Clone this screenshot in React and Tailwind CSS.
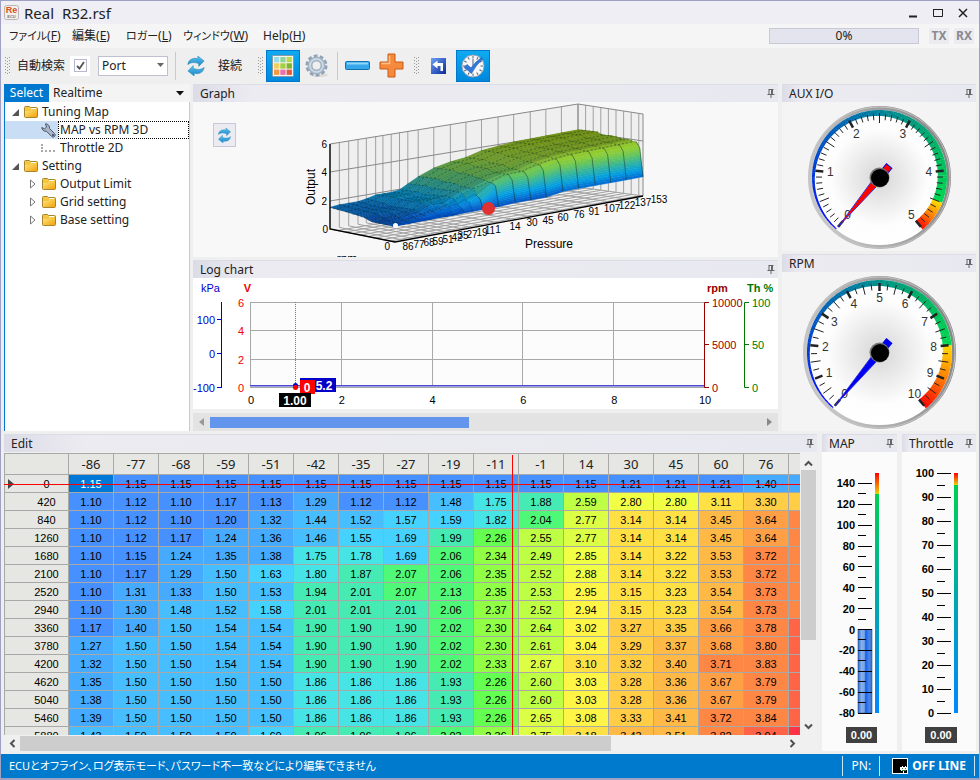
import { useState } from "react";

const columns = [-86, -77, -68, -59, -51, -42, -35, -27, -19, -11, -1, 14, 30, 45, 60, 76, 91];

const mapRows = [
  { rpm: 0, values: [1.15, 1.15, 1.15, 1.15, 1.15, 1.15, 1.15, 1.15, 1.15, 1.15, 1.15, 1.15, 1.21, 1.21, 1.21, 1.4, 1.4] },
  { rpm: 420, values: [1.1, 1.12, 1.1, 1.17, 1.13, 1.29, 1.12, 1.12, 1.48, 1.75, 1.88, 2.59, 2.8, 2.8, 3.11, 3.3, 3.35] },
  { rpm: 840, values: [1.1, 1.12, 1.1, 1.2, 1.32, 1.44, 1.52, 1.57, 1.59, 1.82, 2.04, 2.77, 3.14, 3.14, 3.45, 3.64, 3.75] },
  { rpm: 1260, values: [1.1, 1.12, 1.17, 1.24, 1.36, 1.46, 1.55, 1.69, 1.99, 2.26, 2.55, 2.77, 3.14, 3.14, 3.45, 3.64, 3.75] },
  { rpm: 1680, values: [1.1, 1.15, 1.24, 1.35, 1.38, 1.75, 1.78, 1.69, 2.06, 2.34, 2.49, 2.85, 3.14, 3.22, 3.53, 3.72, 3.83] },
  { rpm: 2100, values: [1.1, 1.17, 1.29, 1.5, 1.63, 1.8, 1.87, 2.07, 2.06, 2.35, 2.52, 2.88, 3.14, 3.22, 3.53, 3.72, 3.83] },
  { rpm: 2520, values: [1.1, 1.31, 1.33, 1.5, 1.53, 1.94, 2.01, 2.07, 2.13, 2.35, 2.53, 2.95, 3.15, 3.23, 3.54, 3.73, 3.84] },
  { rpm: 2940, values: [1.1, 1.3, 1.48, 1.52, 1.58, 2.01, 2.01, 2.01, 2.06, 2.37, 2.52, 2.94, 3.15, 3.23, 3.54, 3.73, 3.84] },
  { rpm: 3360, values: [1.17, 1.4, 1.5, 1.54, 1.54, 1.9, 1.9, 1.9, 2.02, 2.3, 2.64, 3.02, 3.27, 3.35, 3.66, 3.78, 3.89] },
  { rpm: 3780, values: [1.27, 1.5, 1.5, 1.54, 1.54, 1.9, 1.9, 1.9, 2.02, 2.3, 2.61, 3.04, 3.29, 3.37, 3.68, 3.8, 3.91] },
  { rpm: 4200, values: [1.32, 1.5, 1.5, 1.54, 1.54, 1.9, 1.9, 1.9, 2.02, 2.33, 2.67, 3.1, 3.32, 3.4, 3.71, 3.83, 3.94] },
  { rpm: 4620, values: [1.35, 1.5, 1.5, 1.5, 1.5, 1.86, 1.86, 1.86, 1.93, 2.26, 2.6, 3.03, 3.28, 3.36, 3.67, 3.79, 3.9] },
  { rpm: 5040, values: [1.38, 1.5, 1.5, 1.5, 1.5, 1.86, 1.86, 1.86, 1.93, 2.26, 2.6, 3.03, 3.28, 3.36, 3.67, 3.79, 3.9] },
  { rpm: 5460, values: [1.39, 1.5, 1.5, 1.5, 1.5, 1.86, 1.86, 1.86, 1.93, 2.26, 2.65, 3.08, 3.33, 3.41, 3.72, 3.84, 3.92] },
  { rpm: 5880, values: [1.43, 1.5, 1.5, 1.5, 1.6, 1.96, 1.96, 1.96, 2.03, 2.36, 2.75, 3.18, 3.43, 3.51, 3.82, 3.94, 4.05] },
];

// upper limit -> cell colour
const heatScale = [
  [1.22, "#4690ff"],
  [1.41, "#46aaff"],
  [1.55, "#46beff"],
  [1.7, "#46d2ff"],
  [1.865, "#46e4e4"],
  [2.015, "#46ebb4"],
  [2.2, "#50f878"],
  [2.29, "#64ff50"],
  [2.4, "#90ff46"],
  [2.645, "#beff46"],
  [2.785, "#dcff46"],
  [2.9, "#f0ff46"],
  [3.085, "#fff546"],
  [3.25, "#ffe146"],
  [3.355, "#ffcd46"],
  [3.56, "#ffb946"],
  [3.69, "#ffa046"],
  [3.88, "#ff8746"],
  [4, "#ff6446"],
];

const heatColor = (v) => {
  const hit = heatScale.find(([limit]) => v < limit);
  return hit ? hit[1] : "#ff3246";
};

// linear blend over [[position, [r, g, b]], ...]
const blend = (stops, t) => {
  if (t <= stops[0][0]) return stops[0][1];
  for (let i = 1; i < stops.length; i++) {
    const [p1, c1] = stops[i];
    if (t <= p1) {
      const [p0, c0] = stops[i - 1];
      const k = (t - p0) / (p1 - p0);
      return c0.map((c, n) => c + (c1[n] - c) * k);
    }
  }
  return stops[stops.length - 1][1];
};

const toRgb = (c, k = 1) => `rgb(${c.map((n) => Math.round(n * k)).join(",")})`;

/* ---------- icons ---------- */

const PinIcon = () => (
  <svg width="8" height="9" viewBox="0 0 8 9">
    <path d="M1.5 0.5h5M2 0.5v5M5.500 0.5v5M0.500 5.500h7M4 5.500v3.500" stroke="#666" fill="none" />
    <path d="M4 0.500h2v5h-2z" fill="#666" />
  </svg>
);

const SyncIcon = ({ size }) => (
  <svg width={size} height={size} viewBox="0 0 20 22">
    <defs>
      <linearGradient id="sync" x1="0" y1="0" x2="0" y2="1">
        <stop offset="0" stopColor="#5cc4f0" />
        <stop offset="1" stopColor="#1784c8" />
      </linearGradient>
    </defs>
    <path d="M1 9.500C1.500 4 6.500 1.500 12 3V0L19 5.500 13 11.500V8.500C8.500 6.500 4 7 1 9.500Z" fill="url(#sync)" stroke="#2b7cab" strokeWidth="0.5" />
    <path d="M19 12.500C18.500 18 13.500 20.500 8 19V22L1 16.500 7 10.500V13.500C11.500 15.500 16 15 19 12.500Z" fill="url(#sync)" stroke="#2b7cab" strokeWidth="0.5" />
  </svg>
);

const FolderIcon = () => (
  <svg width="14" height="12" viewBox="0 0 14 12">
    <defs>
      <linearGradient id="folder" x1="0" y1="0" x2="1" y2="1">
        <stop offset="0" stopColor="#ffe680" />
        <stop offset="1" stopColor="#f2a30a" />
      </linearGradient>
    </defs>
    <path d="M0.500 1.500q0-1 1-1h4l1 1h6q1 0 1 1v8q0 1-1 1h-11q-1 0-1-1z" fill="#f4c742" stroke="#a8842c" />
    <path d="M1 5h5l1-1.500h6v7.500H1z" fill="url(#folder)" />
    <path d="M7 2.500h5" stroke="#fff" />
  </svg>
);

const WrenchIcon = () => (
  <svg width="15" height="15" viewBox="0 0 15 15">
    <path
      d="M4.500 0.800A4 4 0 0 1 8.500 5.500L13.500 10.500A2 2 0 0 1 10.700 13.500L5.500 8.300A4 4 0 0 1 0.800 4.500L3.500 5.800 5.500 4.200Z"
      fill="#a9b6c6"
      stroke="#4a5668"
    />
    <circle cx="12" cy="12" r="1" fill="#39455a" />
  </svg>
);

const Collapsed = () => (
  <svg width="6" height="10" viewBox="0 0 6 10">
    <path d="M0.500 1L5 5 0.500 9Z" fill="#fff" stroke="#777" />
  </svg>
);

const Expanded = () => (
  <svg width="7" height="7" viewBox="0 0 7 7">
    <path d="M7 0V7H0Z" fill="#555" />
  </svg>
);

const GridIcon = () => (
  <svg width="22" height="22" viewBox="0 0 22 22">
    <rect x="0.500" y="0.500" width="21" height="21" rx="1" fill="#f6f4ee" stroke="#8a98a8" />
    {[
      ["#9adbe8", "#8fd4a0", "#b9d84a"],
      ["#f0d060", "#a5cf3c", "#7fb52e"],
      ["#f59a3c", "#ee6fb0", "#e8583c"],
    ].map((row, y) =>
      row.map((c, x) => <rect key={`${x}${y}`} x={2 + x * 6.3} y={2 + y * 6.3} width="5.300" height="5.300" fill={c} />)
    )}
  </svg>
);

const GearIcon = () => (
  <svg width="24" height="24" viewBox="0 0 24 24">
    <ellipse cx="14" cy="21" rx="9" ry="2" fill="#dcdcdc" />
    <circle cx="11.500" cy="11.500" r="9.500" fill="none" stroke="#8fa0b3" strokeWidth="3" strokeDasharray="3.700 2.270" />
    <circle cx="11.500" cy="11.500" r="6.500" fill="none" stroke="#a0b1c3" strokeWidth="5" />
    <circle cx="11.500" cy="11.500" r="6.500" fill="none" stroke="#cbd7e2" strokeWidth="2" />
  </svg>
);

const MinusIcon = () => (
  <svg width="25" height="9" viewBox="0 0 25 9">
    <rect x="0.500" y="0.500" width="24" height="8" rx="1" fill="#35a7ea" stroke="#1570b0" />
    <path d="M2 2.500h21" stroke="#8fd4fa" strokeWidth="2" />
  </svg>
);

const PlusIcon = () => (
  <svg width="25" height="25" viewBox="0 0 25 25">
    <path d="M9 1h7v8h8v7h-8v8H9v-8H1V9h8z" fill="#f58a3c" stroke="#c65a14" strokeLinejoin="round" />
    <path d="M10.500 2.500v8H2.500" stroke="#ffc08a" strokeWidth="1.500" fill="none" />
  </svg>
);

const UndoIcon = () => (
  <svg width="15" height="16" viewBox="0 0 15 16">
    <defs>
      <linearGradient id="undo" x1="0" y1="0" x2="1" y2="1">
        <stop offset="0" stopColor="#6fa0f4" />
        <stop offset="1" stopColor="#0a2a9c" />
      </linearGradient>
    </defs>
    <rect width="15" height="16" fill="url(#undo)" />
    <path d="M1.500 6.500L6.500 2.500V5H12V13H9.500V8H6.500V10.500Z" fill="#fff" />
  </svg>
);

const ClockIcon = () => (
  <svg width="24" height="24" viewBox="0 0 24 24">
    <circle cx="12" cy="12" r="11" fill="#f4f6fa" stroke="#9aa6b8" />
    {[0, 30, 60, 90, 120, 150, 180, 210, 240, 270, 300, 330].map((a) => (
      <path key={a} d="M12 2v2.500" stroke="#5a6474" transform={`rotate(${a} 12 12)`} />
    ))}
    <path d="M12 12V5" stroke="#8a94a4" strokeWidth="1.500" />
    <path d="M3 13.500L6 10.500 10 14Q14 8 20.500 3.500L21.500 5Q14.500 11.500 10.500 19.500Q7 16 3 13.500Z" fill="#2f78dc" stroke="#1a4ca8" strokeWidth="0.600" />
  </svg>
);

const LogoIcon = () => (
  <svg width="15" height="15" viewBox="0 0 15 15">
    <rect x="0.500" y="0.500" width="14" height="14" rx="2" fill="#f2efec" stroke="#b8b4b0" />
    <text x="7.500" y="8" textAnchor="middle" fontSize="9" fontWeight="bold" fontFamily="Liberation Sans" fill="#d8501e">Re</text>
    <text x="7.500" y="13" textAnchor="middle" fontSize="4" fontWeight="bold" fontFamily="Liberation Sans" fill="#777">ECU</text>
  </svg>
);

const Chevron = ({ d }) => (
  <svg width="9" height="9" viewBox="0 0 9 9">
    <path d={d} fill="none" stroke="#505050" strokeWidth="2" />
  </svg>
);

const Grip = () => (
  <svg className="shrink-0" width="5" height="18" viewBox="0 0 5 18">
    {[0, 1, 2, 3, 4, 5].map((i) => (
      <g key={i} fill="#999">
        <rect x="0" y={i * 3} width="1" height="1" />
        <rect x="4" y={i * 3} width="1" height="1" />
        <rect x="2" y={i * 3 + 1} width="1" height="1" />
      </g>
    ))}
  </svg>
);

/* ---------- panel frame ---------- */

const Panel = ({ title, className = "", children }) => (
  <section className={`flex flex-col min-w-0 ${className}`}>
    <header className="flex items-center justify-between h-[18px] shrink-0 pl-[7px] pr-[3px] border-t border-[#dcdce6] bg-gradient-to-r from-[#dcdce8] via-[#ecebf1] via-10% to-[#e8e8f0]">
      <h2 className="text-[12px] leading-4">{title}</h2>
      <button type="button" aria-label={`Pin ${title}`}>
        <PinIcon />
      </button>
    </header>
    {children}
  </section>
);

/* ---------- 3D surface ---------- */

const extraCols = [107, 122, 137, 153];
const pressures = [...columns, ...extraCols];
const TOTAL_ROWS = 20;

const surface = Array.from({ length: TOTAL_ROWS + 1 }, (_, r) => {
  const src = mapRows[Math.min(r, mapRows.length - 1)].values;
  const fade = Math.max(0, r - 14) / 6;
  const base = src.map((v, c) => v + (c < 5 ? 0.1 * fade : c > 12 ? -0.05 * fade : -0.1 * fade));
  const last = base[base.length - 1];
  return [...base, ...extraCols.map((_, i) => (r === 0 ? 1.4 : last + 0.03 * (i + 1)))];
});

const project = (c, r, v) => {
  const u = (pressures[c] + 86) / 239;
  const w = r / TOTAL_ROWS;
  const x = 395 + 248 * u - 65 * w;
  const y = 242 - 46 * u - 13 * w + 3 * u * w;
  return [x, y - (v * (85 - 3 * u)) / 6];
};

const surfaceStops = [
  [1, [0, 66, 168]],
  [1.3, [0, 92, 204]],
  [1.9, [0, 158, 228]],
  [2.5, [48, 180, 160]],
  [3, [96, 196, 96]],
  [3.5, [142, 206, 56]],
  [4.2, [150, 190, 20]],
];

const surfaceFaces = () => {
  const faces = [];
  for (let r = TOTAL_ROWS - 1; r >= 0; r--) {
    for (let c = pressures.length - 2; c >= 0; c--) {
      const steps = r === 0 ? 12 : 2;
      for (let s = steps - 1; s >= 0; s--) {
        const a = s / steps;
        const b = (s + 1) / steps;
        const at = (col, t) => {
          const v = surface[r][col] + (surface[r + 1][col] - surface[r][col]) * t;
          return { v, p: project(col, r + t, v) };
        };
        const q = [at(c, a), at(c + 1, a), at(c + 1, b), at(c, b)];
        const mean = q.reduce((sum, n) => sum + n.v, 0) / 4;
        const shade = r < 2 ? 1 : r < 4 ? 0.88 : 0.74;
        faces.push({ key: `${r}-${c}-${s}`, points: q.map((n) => n.p.join(",")).join(" "), fill: toRgb(blend(surfaceStops, mean), shade) });
      }
    }
  }
  return faces;
};

const line = (pts) => pts.map((p) => p.join(",")).join(" ");

const SurfaceChart = () => {
  const wallX = pressures.map((p) => (p + 86) / 239);
  const faces = surfaceFaces();
  const labels = [
    ["86", 408, 250], ["77", 419, 248], ["68", 429, 246], ["59", 438, 245], ["51", 448, 243], ["42", 457, 241],
    ["35", 463, 239], ["27", 472, 238], ["19", 482, 236], ["11", 490, 234], ["1", 498, 233], ["14", 515, 230],
    ["30", 532, 226], ["45", 548, 224], ["60", 563, 221], ["76", 579, 218], ["91", 594, 215], ["107", 612, 212],
    ["122", 627, 209], ["137", 643, 206], ["153", 659, 203],
  ];
  return (
    <svg viewBox="193 102 585 155" className="w-full h-full" fontFamily="Liberation Sans" fontSize="10">
      <polygon points="330,144 578,104 578,187 330,229" fill="#efefef" />
      <polygon points="578,104 643,114 643,196 578,187" fill="#efefef" />
      <polygon points="330,229 395,242 643,196 578,187" fill="#f2f2f2" />
      <g stroke="#a0a0a0" fill="none">
        {wallX.map((u, i) => (
          <path key={i} d={`M${330 + 248 * u} ${144 - 40 * u}V${229 - 42 * u}L${395 + 248 * u} ${242 - 46 * u}`} />
        ))}
        {[1, 2, 3, 4, 5, 6, 7, 8].map((i) => (
          <path key={i} d={`M${578 + i * 7.6} ${104 + i * 1.2}V${187 + i * 1.1}L${330 + i * 7.6} ${229 + i * 1.5}`} />
        ))}
        <path d="M330 144L578 104 643 114V196M330 172L578 131.500 643 141M330 201L578 159 643 168M578 104V187" stroke="#888" />
      </g>
      {faces.map((f) => (
        <polygon key={f.key} points={f.points} fill={f.fill} stroke={f.fill} strokeWidth="0.400" />
      ))}
      <g fill="none" stroke="#0a2a20">
        {pressures.map((_, c) => (
          <g key={c}>
            <polyline points={line(surface.slice(0, 3).map((row, r) => project(c, r, row[c])))} opacity={c > 9 ? 0.6 : 0.2} strokeWidth="0.800" />
            <polyline points={line(surface.slice(2).map((row, r) => project(c, r + 2, row[c])))} opacity="0.500" strokeDasharray="2 2" strokeWidth="0.800" />
          </g>
        ))}
        {surface.map((row, r) =>
          r > 2 && r % 3 === 0 ? (
            <polyline key={r} points={line(row.map((v, c) => project(c, r, v)))} opacity="0.500" strokeDasharray="2 2" strokeWidth="0.800" />
          ) : null
        )}
      </g>
      <path d="M330 144V229L395 242 643 196" fill="none" stroke="#000" strokeWidth="1.300" />
      <circle cx="488.500" cy="208.500" r="6.500" fill="#e03030" />
      <circle cx="395.500" cy="225.500" r="2.500" fill="#fff" />
      <g textAnchor="end">
        <text x="327" y="148">6</text>
        <text x="327" y="176">4</text>
        <text x="327" y="205">2</text>
        <text x="328" y="233">0</text>
        <text x="390" y="250">0</text>
      </g>
      <g textAnchor="middle">
        {labels.map(([t, x, y]) => (
          <text key={t} x={x} y={y}>{t}</text>
        ))}
        <text x="549" y="248" fontSize="12">Pressure</text>
        <text fontSize="12" transform="translate(315 187) rotate(-90)">Output</text>
        <text x="347" y="263" fontSize="12">rpm</text>
      </g>
    </svg>
  );
};

/* ---------- log chart ---------- */

const LogChart = () => (
  <svg viewBox="193 278 585 131" className="w-full h-full" fontFamily="Liberation Sans" fontSize="11">
    <rect x="250" y="302" width="455" height="85" fill="#fcfcfc" />
    <path
      d="M250.500 302V388M341.500 302V388M432.500 302V388M522.500 302V388M613.500 302V388M250 302.500H705M250 330.500H705M250 359.500H705M250 387.500H705"
      stroke="#a8a8a8"
      fill="none"
    />
    <path d="M250 386.500H705" stroke="#a0a0e0" />
    <path d="M250 385.500H705" stroke="#4a4ad0" />
    <path d="M295.500 302V386" stroke="#777" strokeDasharray="1 1" />
    <path d="M221.500 302V388M217 319.500H221M217 353.500H221M217 387.500H221" stroke="#0000c8" />
    <path d="M709 302.500H704.500V387.500H709M705 344.500H709" stroke="#960000" fill="none" />
    <path d="M749 302.500H744.500V387.500H749M745 344.500H749" stroke="#007800" fill="none" />
    <g fill="#0000c8">
      <text x="201" y="292">kPa</text>
      <g textAnchor="end">
        <text x="215" y="324">100</text>
        <text x="215" y="358">0</text>
        <text x="215" y="392">-100</text>
      </g>
    </g>
    <g fill="#f00000" textAnchor="end">
      <text x="251" y="292" fontWeight="bold">V</text>
      <text x="244" y="307">6</text>
      <text x="244" y="335">4</text>
      <text x="244" y="364">2</text>
      <text x="244" y="392">0</text>
    </g>
    <g fill="#960000">
      <text x="707" y="292" fontWeight="bold">rpm</text>
      <text x="712" y="307">10000</text>
      <text x="712" y="349">5000</text>
      <text x="712" y="392">0</text>
    </g>
    <g fill="#007800">
      <text x="747" y="292" fontWeight="bold">Th %</text>
      <text x="752" y="307">100</text>
      <text x="752" y="349">50</text>
      <text x="752" y="392">0</text>
    </g>
    <g textAnchor="middle">
      {[0, 2, 4, 6, 8, 10].map((n) => (
        <text key={n} x={251 + n * 45.4} y="404">{n}</text>
      ))}
    </g>
    <circle cx="295.500" cy="385.500" r="2.500" fill="#0000c8" />
    <circle cx="295.500" cy="387.500" r="2.500" fill="#f00" />
    <g fill="#fff" fontWeight="bold" fontSize="12" textAnchor="middle">
      <rect x="300" y="378" width="36" height="14" fill="#0000c8" />
      <text x="324" y="390">5.2</text>
      <rect x="300" y="380" width="15" height="14" fill="#f00" />
      <text x="307" y="392">0</text>
      <rect x="279" y="393" width="32" height="14" fill="#000" />
      <text x="295" y="405">1.00</text>
    </g>
  </svg>
);

/* ---------- round gauge ---------- */

const arcStops = [
  [0, [0, 0, 255]],
  [0.3, [0, 80, 200]],
  [0.5, [0, 120, 165]],
  [0.65, [0, 150, 130]],
  [0.8, [0, 180, 100]],
  [1, [0, 215, 80]],
];
const warnStops = [
  [0, [255, 215, 0]],
  [0.5, [255, 120, 0]],
  [1, [255, 0, 0]],
];

const polar = (deg, r) => [Math.cos((deg * Math.PI) / 180) * r, Math.sin((deg * Math.PI) / 180) * r];

const Gauge = ({ id, size, max, minor, mid, warn, needle }) => {
  const R = size / 2;
  const outer = R - 4;
  const angle = (v) => 130 + (280 * v) / max;
  const segments = Array.from({ length: 140 }, (_, i) => {
    const t0 = i / 140;
    const t1 = (i + 1) / 140;
    const limit = warn / max;
    const color = t0 < limit - 0.001 ? blend(arcStops, t0 / limit) : blend(warnStops, (t0 - limit) / (1 - limit));
    const a0 = 130 + 280 * t0;
    const a1 = 130 + 280 * t1 + 0.3;
    const w0 = 1 + 10 * t0;
    const w1 = 1 + 10 * t1;
    return { points: line([polar(a0, outer), polar(a1, outer), polar(a1, outer - w1), polar(a0, outer - w0)]), fill: toRgb(color) };
  });
  const count = Math.round(max / minor);
  const midEvery = Math.round(mid / minor);
  const majorEvery = Math.round(1 / minor);
  return (
    <svg width={size} height={size} viewBox={`${-R} ${-R} ${size} ${size}`} role="img" aria-label={`${id} gauge`}>
      <defs>
        <radialGradient id={`${id}-face`}>
          <stop offset="0" stopColor="#d6d6d6" />
          <stop offset="0.700" stopColor="#fdfdfd" />
          <stop offset="1" stopColor="#fff" />
        </radialGradient>
        <linearGradient id={`${id}-rim`} x1="0" y1="0.400" x2="1" y2="0.100">
          <stop offset="0" stopColor="#c8c8c8" />
          <stop offset="1" stopColor="#808080" />
        </linearGradient>
      </defs>
      <circle r={R - 2} fill={`url(#${id}-face)`} stroke={`url(#${id}-rim)`} strokeWidth="4" />
      <circle r={R - 1} fill="none" stroke="#c4c4c4" strokeWidth="1" />
      {segments.map((s, i) => (
        <polygon key={i} points={s.points} fill={s.fill} />
      ))}
      {Array.from({ length: count + 1 }, (_, i) => {
        const major = i % majorEvery === 0;
        const half = i % midEvery === 0;
        const a = angle(i * minor);
        const from = polar(a, outer - (major || half ? 3 : 4));
        const to = polar(a, outer - (major ? 11 : half ? 13 : 10));
        return <path key={i} d={`M${from.join(" ")}L${to.join(" ")}`} stroke="#222" strokeWidth={major ? 2.5 : 1} />;
      })}
      <g fontFamily="Liberation Sans" fontSize="12" fill="#333" textAnchor="middle">
        {Array.from({ length: max + 1 }, (_, i) => {
          const [x, y] = polar(angle(i), outer - 18);
          return <text key={i} x={x} y={y + 4}>{i}</text>;
        })}
      </g>
      <g transform="rotate(130)">
        <path d={`M0 -4V4L${outer - 3} 0Z`} fill={needle} stroke="#2a2ae0" strokeWidth="0.800" />
        <path d="M-15 -3.500h6v7h-6z" fill={needle} stroke="#0000e0" strokeWidth="1" />
      </g>
      <circle r="10" fill="#777" />
      <circle cx="0.500" cy="0.500" r="9" fill="#000" />
    </svg>
  );
};

/* ---------- bar gauge ---------- */

const BarGauge = ({ id, min, max, step, top, fillTo, warn, value }) => {
  const y = (v) => 473 + ((top - v) * 240) / (top - min);
  const majors = [];
  for (let v = min; v <= max; v += step) majors.push(v);
  const minors = majors.map((v) => v + step / 2).filter((v) => v < top);
  return (
    <div className="flex-1 min-h-0 flex flex-col items-center bg-[#fbfbfb] pb-2">
      <svg className="shrink-0" width="74" height="275" viewBox="822 452 74 275" fontFamily="Liberation Sans" fontSize="11" fontWeight="bold">
        <defs>
          <linearGradient id={`${id}-range`} x1="0" y1="0" x2="0" y2="1">
            <stop offset="0" stopColor="#00d050" />
            <stop offset="0.600" stopColor="#00a0c0" />
            <stop offset="1" stopColor="#0088ff" />
          </linearGradient>
          <linearGradient id={`${id}-warn`} x1="0" y1="0" x2="0" y2="1">
            <stop offset="0" stopColor="#ff0000" />
            <stop offset="1" stopColor="#f0d000" />
          </linearGradient>
          <linearGradient id={`${id}-tube`} x1="0" y1="0" x2="1" y2="0">
            <stop offset="0" stopColor="#2f66c0" />
            <stop offset="0.250" stopColor="#86b0ea" />
            <stop offset="0.450" stopColor="#7aa4e4" />
            <stop offset="0.550" stopColor="#1460f0" />
            <stop offset="0.800" stopColor="#4a88e4" />
            <stop offset="1" stopColor="#3a6cb8" />
          </linearGradient>
        </defs>
        {fillTo !== undefined && (
          <rect x="857" y={y(fillTo)} width="14" height={y(min) - y(fillTo)} fill={`url(#${id}-tube)`} stroke="#2a58a8" strokeWidth="0.600" />
        )}
        <rect x="874" y="473" width="4" height={y(warn) - 473} fill={`url(#${id}-warn)`} />
        <rect x="874" y={y(warn)} width="4" height={y(min) - y(warn)} fill={`url(#${id}-range)`} />
        {majors.map((v) => (
          <g key={v}>
            <path d={`M857 ${Math.floor(y(v)) + 0.5}h14`} stroke="#000" />
            <text x="854" y={y(v) + 4} textAnchor="end">{v}</text>
          </g>
        ))}
        {minors.map((v) => (
          <path key={v} d={`M857 ${Math.floor(y(v)) + 0.5}h8`} stroke="#000" />
        ))}
      </svg>
      <output className="ml-1 bg-[#404040] text-white font-bold text-[11px] leading-4 px-[5px] font-['Liberation_Sans',sans-serif]">
        {value}
      </output>
    </div>
  );
};

/* ---------- tree ---------- */

const treeItems = [
  { label: "Tuning Map", level: 0, icon: "folder", open: true },
  { label: "MAP vs RPM 3D", level: 1, icon: "wrench" },
  { label: "Throttle 2D", level: 1, icon: "dots" },
  { label: "Setting", level: 0, icon: "folder", open: true },
  { label: "Output Limit", level: 1, icon: "folder" },
  { label: "Grid setting", level: 1, icon: "folder" },
  { label: "Base setting", level: 1, icon: "folder" },
];

const SidePanel = () => {
  const [selected, setSelected] = useState("MAP vs RPM 3D");
  return (
    <aside className="w-[186px] shrink-0 flex flex-col">
      <div className="flex h-[18px] items-center bg-[#f4f4f4]">
        <button type="button" className="h-full w-[45px] bg-[#0078d0] text-white">Select</button>
        <button type="button" className="px-1">Realtime</button>
        <button type="button" aria-label="More tabs" className="ml-auto pr-[6px]">
          <svg width="8" height="5" viewBox="0 0 8 5">
            <path d="M0 0H8L4 4.500Z" fill="#111" />
          </svg>
        </button>
      </div>
      <ul className="flex-1 bg-white border-l border-l-[#0078d0] border-r border-r-[#c8c8d8] pt-px">
        {treeItems.map((item) => {
          const active = selected === item.label;
          return (
            <li
              key={item.label}
              className={`flex items-center h-[18px] cursor-default ${item.level ? "pl-5" : "pl-[2px]"} ${active ? "bg-[#c9ddf5]" : ""}`}
              onClick={() => setSelected(item.label)}
            >
              <span className="w-4 shrink-0 flex justify-center">
                {item.icon === "folder" && (item.open ? <Expanded /> : <Collapsed />)}
              </span>
              <span className="w-[17px] shrink-0 flex">
                {item.icon === "folder" && <span className="pl-px"><FolderIcon /></span>}
                {item.icon === "wrench" && <WrenchIcon />}
                {item.icon === "dots" && <span className="w-[14px] h-2 border-l-2 border-b-2 border-dotted border-[#aaa]" />}
              </span>
              <span className={`flex-1 leading-4 pl-px border border-dotted ${active ? "bg-white border-black" : "border-transparent"}`}>
                {item.label}
              </span>
            </li>
          );
        })}
      </ul>
    </aside>
  );
};

/* ---------- edit table ---------- */

const EditTable = () => (
  <div className="flex-1 min-h-0 flex flex-col pt-px">
    <div className="flex-1 min-h-0 flex">
      <div className="relative flex-1 min-w-0 overflow-hidden bg-white">
        <table className="table-fixed border-collapse w-[829px] text-center">
          <thead>
            <tr className="h-[21px] bg-[#e6e6e2] text-[13px] leading-4">
              <th className="w-16 border border-[#a8a8a8]" aria-label="rpm" />
              {columns.map((c) => (
                <th key={c} className="w-[45px] border border-[#a8a8a8] font-normal">{c}</th>
              ))}
            </tr>
          </thead>
          <tbody>
            {mapRows.map((row, r) => (
              <tr key={row.rpm} className="h-[18px]">
                <th className="border border-[#a8a8a8] bg-[#e6e6e2] font-normal p-0 text-[11px] leading-4 text-black font-['Liberation_Sans',sans-serif]">
                  <div className="flex items-center">
                    <span className="w-5 flex justify-center pr-2">
                      {r === 0 && (
                        <svg width="6" height="10" viewBox="0 0 6 10">
                          <path d="M0 0L6 5 0 10Z" fill="#444" />
                        </svg>
                      )}
                    </span>
                    <span className="flex-1">{row.rpm}</span>
                  </div>
                </th>
                {row.values.map((v, c) => (
                  <td
                    key={c}
                    className={`border border-[#a8a8a8] p-0 text-[11px] leading-4 font-['Liberation_Sans',sans-serif] ${r === 0 && c === 0 ? "text-white" : "text-black"}`}
                    style={{ backgroundColor: r === 0 && c === 0 ? "#0078d7" : heatColor(v) }}
                  >
                    {v.toFixed(2)}
                  </td>
                ))}
              </tr>
            ))}
          </tbody>
        </table>
        {/* cursor cross hair */}
        <div className="absolute left-0 right-0 top-[31px] h-px bg-[#ff0000]" />
        <div className="absolute top-[2px] bottom-0 left-[508px] w-px bg-[#ff0000]" />
      </div>
      <div className="w-[17px] shrink-0 flex flex-col items-center bg-[#f0f0f0] py-1">
        <button type="button" aria-label="Scroll up" className="h-[13px]"><Chevron d="M1 6.500L4.500 3 8 6.500" /></button>
        <div className="w-[15px] h-[170px] bg-[#cdcdcd]" />
        <button type="button" aria-label="Scroll down" className="mt-auto"><Chevron d="M1 2.500L4.500 6 8 2.500" /></button>
      </div>
    </div>
    <div className="h-4 shrink-0 flex items-center bg-[#f0f0f0] pr-5">
      <button type="button" aria-label="Scroll left" className="w-4 flex justify-center"><Chevron d="M6.500 1L3 4.500 6.500 8" /></button>
      <div className="flex-1 h-[15px]">
        <div className="h-full w-[77%] bg-[#cdcdcd]" />
      </div>
      <button type="button" aria-label="Scroll right"><Chevron d="M2.500 1L6 4.500 2.500 8" /></button>
    </div>
  </div>
);

/* ---------- top bars ---------- */

const menus = [
  { label: "ファイル", key: "F", width: "w-[63px]" },
  { label: "編集", key: "E", width: "w-[54px]" },
  { label: "ロガー", key: "L", width: "w-[57px]" },
  { label: "ウィンドウ", key: "W", width: "w-[80px]" },
  { label: "Help", key: "H", width: "w-[60px]" },
];

const TopBars = () => {
  const [auto, setAuto] = useState(true);
  return (
    <>
      <div className="flex items-center h-[23px] bg-[#eeeef4] pl-[3px] pr-1">
        <LogoIcon />
        <h1 className="ml-[5px] text-[15px] leading-5 whitespace-pre">Real  R32.rsf</h1>
        <div className="ml-auto flex">
          <button type="button" aria-label="Minimize" className="w-[25px] flex justify-center">
            <svg width="10" height="10" viewBox="0 0 10 10"><path d="M1 8.500h8" stroke="#222" strokeWidth="2" /></svg>
          </button>
          <button type="button" aria-label="Maximize" className="w-[25px] flex justify-center">
            <svg width="10" height="10" viewBox="0 0 10 10"><path d="M0.500 1.500h9v7h-9zM0 1.500h10" stroke="#222" fill="none" /></svg>
          </button>
          <button type="button" aria-label="Close" className="w-[25px] flex justify-center">
            <svg width="10" height="10" viewBox="0 0 10 10"><path d="M1 1L9 9M9 1L1 9" stroke="#222" strokeWidth="1.500" /></svg>
          </button>
        </div>
      </div>

      <nav className="flex items-center h-6 bg-[#f5f5f5] pl-2 pr-[5px]">
        {menus.map((m) => (
          <button key={m.key} type="button" className={`${m.width} text-left whitespace-nowrap`}>
            <span className={m.key === "H" || m.key === "E" ? "" : "text-[11px]"}>{m.label}</span>(<u>{m.key}</u>)
          </button>
        ))}
        <div role="progressbar" aria-label="Progress" aria-valuenow={0} className="ml-auto w-[150px] h-4 leading-[14px] border border-[#c8c8d8] bg-[#e4e4ee] text-center">0%</div>
        <span className="ml-[10px] w-5 text-center text-[#8a8a90] font-bold bg-[#ececf0] leading-4">TX</span>
        <span className="ml-[5px] w-5 text-center text-[#8a8a90] font-bold bg-[#ececf0] leading-4">RX</span>
      </nav>

      <div className="flex items-center h-[35px] bg-[#efefef] pl-1">
        <Grip />
        <label htmlFor="auto" className="ml-[7px] w-[53px]">自動検索</label>
        <span className="relative flex w-5 h-5 items-center justify-center bg-white">
          <input
            id="auto"
            type="checkbox"
            checked={auto}
            onChange={(e) => setAuto(e.target.checked)}
            className="appearance-none w-[13px] h-[13px] border border-[#b8b8cc] bg-white"
          />
          {auto && (
            <svg className="absolute pointer-events-none" width="9" height="9" viewBox="0 0 9 9">
              <path d="M1 5L3.500 7.500 8 1" stroke="#555" strokeWidth="1.800" fill="none" />
            </svg>
          )}
        </span>
        <span className="relative ml-2 flex items-center">
          <select aria-label="Port" className="appearance-none w-[70px] h-5 pl-[3px] border border-[#c0c0d0] bg-white leading-4">
            <option>Port</option>
          </select>
          <svg className="absolute right-1 pointer-events-none" width="7" height="5" viewBox="0 0 7 5">
            <path d="M0 0H7L3.500 4Z" fill="#666" />
          </svg>
        </span>
        <span className="ml-[7px] mr-[10px] w-px h-7 bg-[#c8c8d4]" />
        <button type="button" className="flex items-center gap-3">
          <SyncIcon size={20} />
          接続
        </button>
        <span className="ml-4 flex"><Grip /></span>
        <button type="button" aria-label="Grid" className="ml-[3px] w-[34px] h-8 flex items-center justify-center border border-[#0078d0] bg-gradient-to-b from-[#10aaf0] to-[#0088dc]">
          <GridIcon />
        </button>
        <button type="button" aria-label="Options" className="ml-[5px]"><GearIcon /></button>
        <span className="ml-2 mr-[7px] w-px h-7 bg-[#c8c8d4]" />
        <button type="button" aria-label="Decrease"><MinusIcon /></button>
        <button type="button" aria-label="Increase" className="ml-[9px]"><PlusIcon /></button>
        <span className="ml-[10px] flex"><Grip /></span>
        <button type="button" aria-label="Undo" className="ml-3"><UndoIcon /></button>
        <button type="button" aria-label="Clock" className="ml-[10px] w-[34px] h-8 flex items-center justify-center border border-[#0078d0] bg-gradient-to-b from-[#10aaf0] to-[#0088dc]">
          <ClockIcon />
        </button>
      </div>
    </>
  );
};

const App = () => (
  <div className="h-screen flex flex-col bg-[#efefef] border border-b-2 border-[#a0a0c4] text-[12px] leading-4 text-[#222] font-['Noto_Sans','Noto_Sans_CJK_JP',sans-serif] [font-feature-settings:'palt']">
    <TopBars />

    <main className="flex-1 min-h-0 flex flex-col px-[3px] pt-px">
      <div className="flex shrink-0">
        <SidePanel />

        <div className="flex-1 min-w-0 ml-[3px] flex flex-col">
          <Panel title="Graph">
            <div className="relative h-[155px] bg-[#f8f8f8]">
              <SurfaceChart />
              <button type="button" aria-label="Refresh graph" className="absolute left-5 top-[21px] w-[23px] h-6 flex items-center justify-center border border-[#c8c8d8] bg-[#ecebf1]">
                <SyncIcon size={15} />
              </button>
            </div>
          </Panel>
          <Panel title="Log chart" className="mt-[3px]">
            <div className="h-[131px] bg-white">
              <LogChart />
            </div>
            <div className="mt-1 h-[18px] flex items-center bg-[#e3e3e3] px-[6px]">
              <button type="button" aria-label="Scroll log left">
                <svg width="5" height="8" viewBox="0 0 5 8"><path d="M5 0V8L0 4Z" fill="#999" /></svg>
              </button>
              <div className="flex-1 mx-[6px]">
                <div className="h-[11px] w-[47%] bg-[#6495ed]" />
              </div>
              <button type="button" aria-label="Scroll log right">
                <svg width="5" height="8" viewBox="0 0 5 8"><path d="M0 0V8L5 4Z" fill="#888" /></svg>
              </button>
            </div>
          </Panel>
        </div>

        <div className="w-[194px] ml-1 shrink-0 flex flex-col">
          <Panel title="AUX I/O">
            <div className="h-[149px] flex justify-center pt-1 bg-[#f4f4f4]">
              <Gauge id="aux" size={143} max={5} minor={0.1} mid={0.5} warn={4.5} needle="#ff0000" />
            </div>
          </Panel>
          <Panel title="RPM" className="mt-[3px] flex-1">
            <div className="flex-1 flex justify-center pt-1 bg-[#f4f4f4]">
              <Gauge id="rpm" size={153} max={10} minor={0.25} mid={0.5} warn={8} needle="#0000f0" />
            </div>
          </Panel>
        </div>
      </div>

      <div className="flex-1 min-h-0 flex gap-[5px] mt-[3px] mb-[3px]">
        <Panel title="Edit" className="flex-1">
          <EditTable />
        </Panel>
        <Panel title="MAP" className="w-[75px] shrink-0">
          <BarGauge id="map" min={-80} max={140} step={20} top={150} fillTo={0} warn={130} value="0.00" />
        </Panel>
        <Panel title="Throttle" className="w-[74px] shrink-0">
          <BarGauge id="throttle" min={0} max={100} step={10} top={100} warn={95} value="0.00" />
        </Panel>
      </div>
    </main>

    <footer className="flex items-center h-6 shrink-0 bg-[#007acc] text-white pl-2 pr-1">
      <p className="flex-1 truncate text-[11px]">ECUとオフライン、ログ表示モード、パスワード不一致などにより編集できません</p>
      <span className="h-5 w-[38px] border-x border-white/80 text-center leading-5">PN:</span>
      <span className="h-5 flex items-center gap-1 pl-3 pr-2 border-r border-white/80 font-bold">
        <svg width="16" height="16" viewBox="0 0 16 16">
          <rect x="0.500" y="0.500" width="15" height="15" fill="#000" stroke="#fff" />
          <path d="M9 9h1v-1h1v1h2v-1h1v1h1v3h-1v1h-2v2h-1v-2h-2v-1h-1v-3z" fill="#fff" />
          <path d="M10 10h1v1h-1zM13 10h1v1h-1zM10 12h4v1h-4z" fill="#2a8a2a" />
        </svg>
        OFF LINE
      </span>
    </footer>
  </div>
);

export default App;
